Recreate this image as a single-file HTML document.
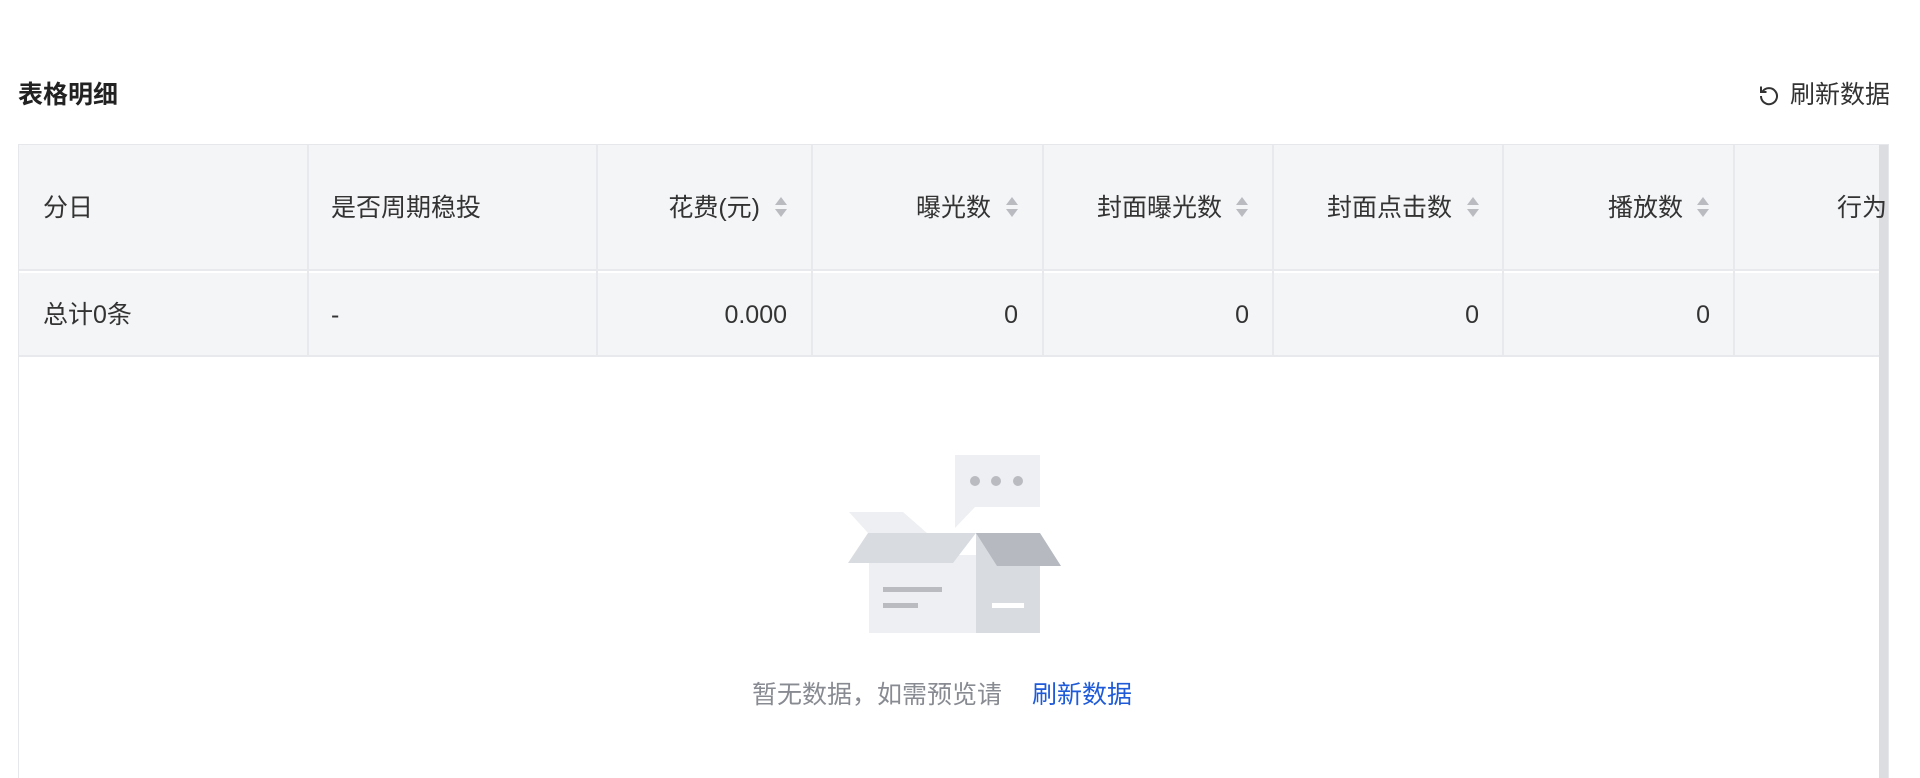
<!DOCTYPE html>
<html><head><meta charset="utf-8"><style>
*{margin:0;padding:0;box-sizing:border-box}
html,body{width:1920px;height:778px;overflow:hidden}
body{background:#fff;font-family:"Liberation Sans","Noto Sans CJK SC",sans-serif;color:#333;position:relative}
.t{position:absolute;white-space:nowrap;line-height:1}
.title{left:18px;top:83px;font-size:25px;font-weight:bold;color:#222}
.ref{left:1790px;top:83px;font-size:25px;color:#333}
.tbl{position:absolute;left:18px;top:144px;width:1871px;height:634px;border:1px solid #e6e7ea;border-bottom:none;background:#fff;overflow:hidden}
.hd{position:absolute;left:0;top:0;width:1862px;height:126px;background:#f4f5f7;border-bottom:2px solid #e8e9ec}
.sm{position:absolute;left:0;top:128px;width:1862px;height:84px;background:#f4f5f7;border-bottom:2px solid #e8e9ec}
.vl{position:absolute;top:0;width:2px;height:212px;background:#e8e9ec}
.sb{position:absolute;right:0;top:0;width:9px;height:634px;background:#dcdde0}
.c{position:absolute;font-size:25px;line-height:1;white-space:nowrap;color:#333}
.arr{position:absolute;width:14px;height:22px}
</style></head><body>
<div class="t title">表格明细</div>
<svg style="position:absolute;left:1757px;top:83px" width="24" height="24" viewBox="0 0 24 24" fill="none" stroke="#333" stroke-width="2"><path d="M5.5 8.5A8 8 0 1 1 4 13"/><path d="M4 3.5v5.5h5.5"/></svg>
<div class="t ref">刷新数据</div>
<div class="tbl">
<div class="hd"></div><div class="sm"></div>
<div class="vl" style="left:288px"></div>
<div class="vl" style="left:577px"></div>
<div class="vl" style="left:792px"></div>
<div class="vl" style="left:1023px"></div>
<div class="vl" style="left:1253px"></div>
<div class="vl" style="left:1483px"></div>
<div class="vl" style="left:1714px"></div>
<div class="sb"></div>
<div class="c" style="left:24px;top:51px">分日</div>
<div class="c" style="left:312px;top:51px">是否周期稳投</div>
<div class="c" style="right:1128px;top:51px">花费(元)</div>
<div class="c" style="right:897px;top:51px">曝光数</div>
<div class="c" style="right:666px;top:51px">封面曝光数</div>
<div class="c" style="right:436px;top:51px">封面点击数</div>
<div class="c" style="right:205px;top:51px">播放数</div>
<div class="c" style="left:1818px;top:51px">行为</div>
<svg class="arr" style="left:755px;top:51px" viewBox="0 0 14 22"><path d="M7 1L13 9H1z M7 21L13 13H1z" fill="#b9bbc1"/></svg>
<svg class="arr" style="left:986px;top:51px" viewBox="0 0 14 22"><path d="M7 1L13 9H1z M7 21L13 13H1z" fill="#b9bbc1"/></svg>
<svg class="arr" style="left:1216px;top:51px" viewBox="0 0 14 22"><path d="M7 1L13 9H1z M7 21L13 13H1z" fill="#b9bbc1"/></svg>
<svg class="arr" style="left:1447px;top:51px" viewBox="0 0 14 22"><path d="M7 1L13 9H1z M7 21L13 13H1z" fill="#b9bbc1"/></svg>
<svg class="arr" style="left:1677px;top:51px" viewBox="0 0 14 22"><path d="M7 1L13 9H1z M7 21L13 13H1z" fill="#b9bbc1"/></svg>
<div class="c" style="left:24px;top:158px">总计0条</div>
<div class="c" style="left:312px;top:158px">-</div>
<div class="c" style="right:1101px;top:158px">0.000</div>
<div class="c" style="right:870px;top:158px">0</div>
<div class="c" style="right:639px;top:158px">0</div>
<div class="c" style="right:409px;top:158px">0</div>
<div class="c" style="right:178px;top:158px">0</div>
</div>
<svg style="position:absolute;left:0;top:0" width="1920" height="778">
<path d="M955 455H1040V507H975L955 528Z" fill="#eeeff2"/>
<circle cx="975" cy="481" r="5" fill="#b9bbc1"/><circle cx="996" cy="481" r="5" fill="#b9bbc1"/><circle cx="1018" cy="481" r="5" fill="#b9bbc1"/>
<path d="M849 512H903L927 533H868Z" fill="#eeeff2"/>
<rect x="869" y="555" width="107" height="78" fill="#eeeff2"/>
<rect x="976" y="533" width="64" height="100" fill="#d8dbe0"/>
<path d="M848 563L868 533H976L953 563Z" fill="#d8dbe0"/>
<path d="M976 533H1040L1061 566H997Z" fill="#b6b9bf"/>
<rect x="883" y="587" width="59" height="5" fill="#b9bbc1"/>
<rect x="883" y="603" width="35" height="5" fill="#b9bbc1"/>
<rect x="992" y="603" width="32" height="5" fill="#fff"/>
</svg>
<div class="t" style="left:752px;top:683px;font-size:25px;color:#888b92">暂无数据，如需预览请</div>
<div class="t" style="left:1032px;top:683px;font-size:25px;color:#1f5bd8">刷新数据</div>
</body></html>
